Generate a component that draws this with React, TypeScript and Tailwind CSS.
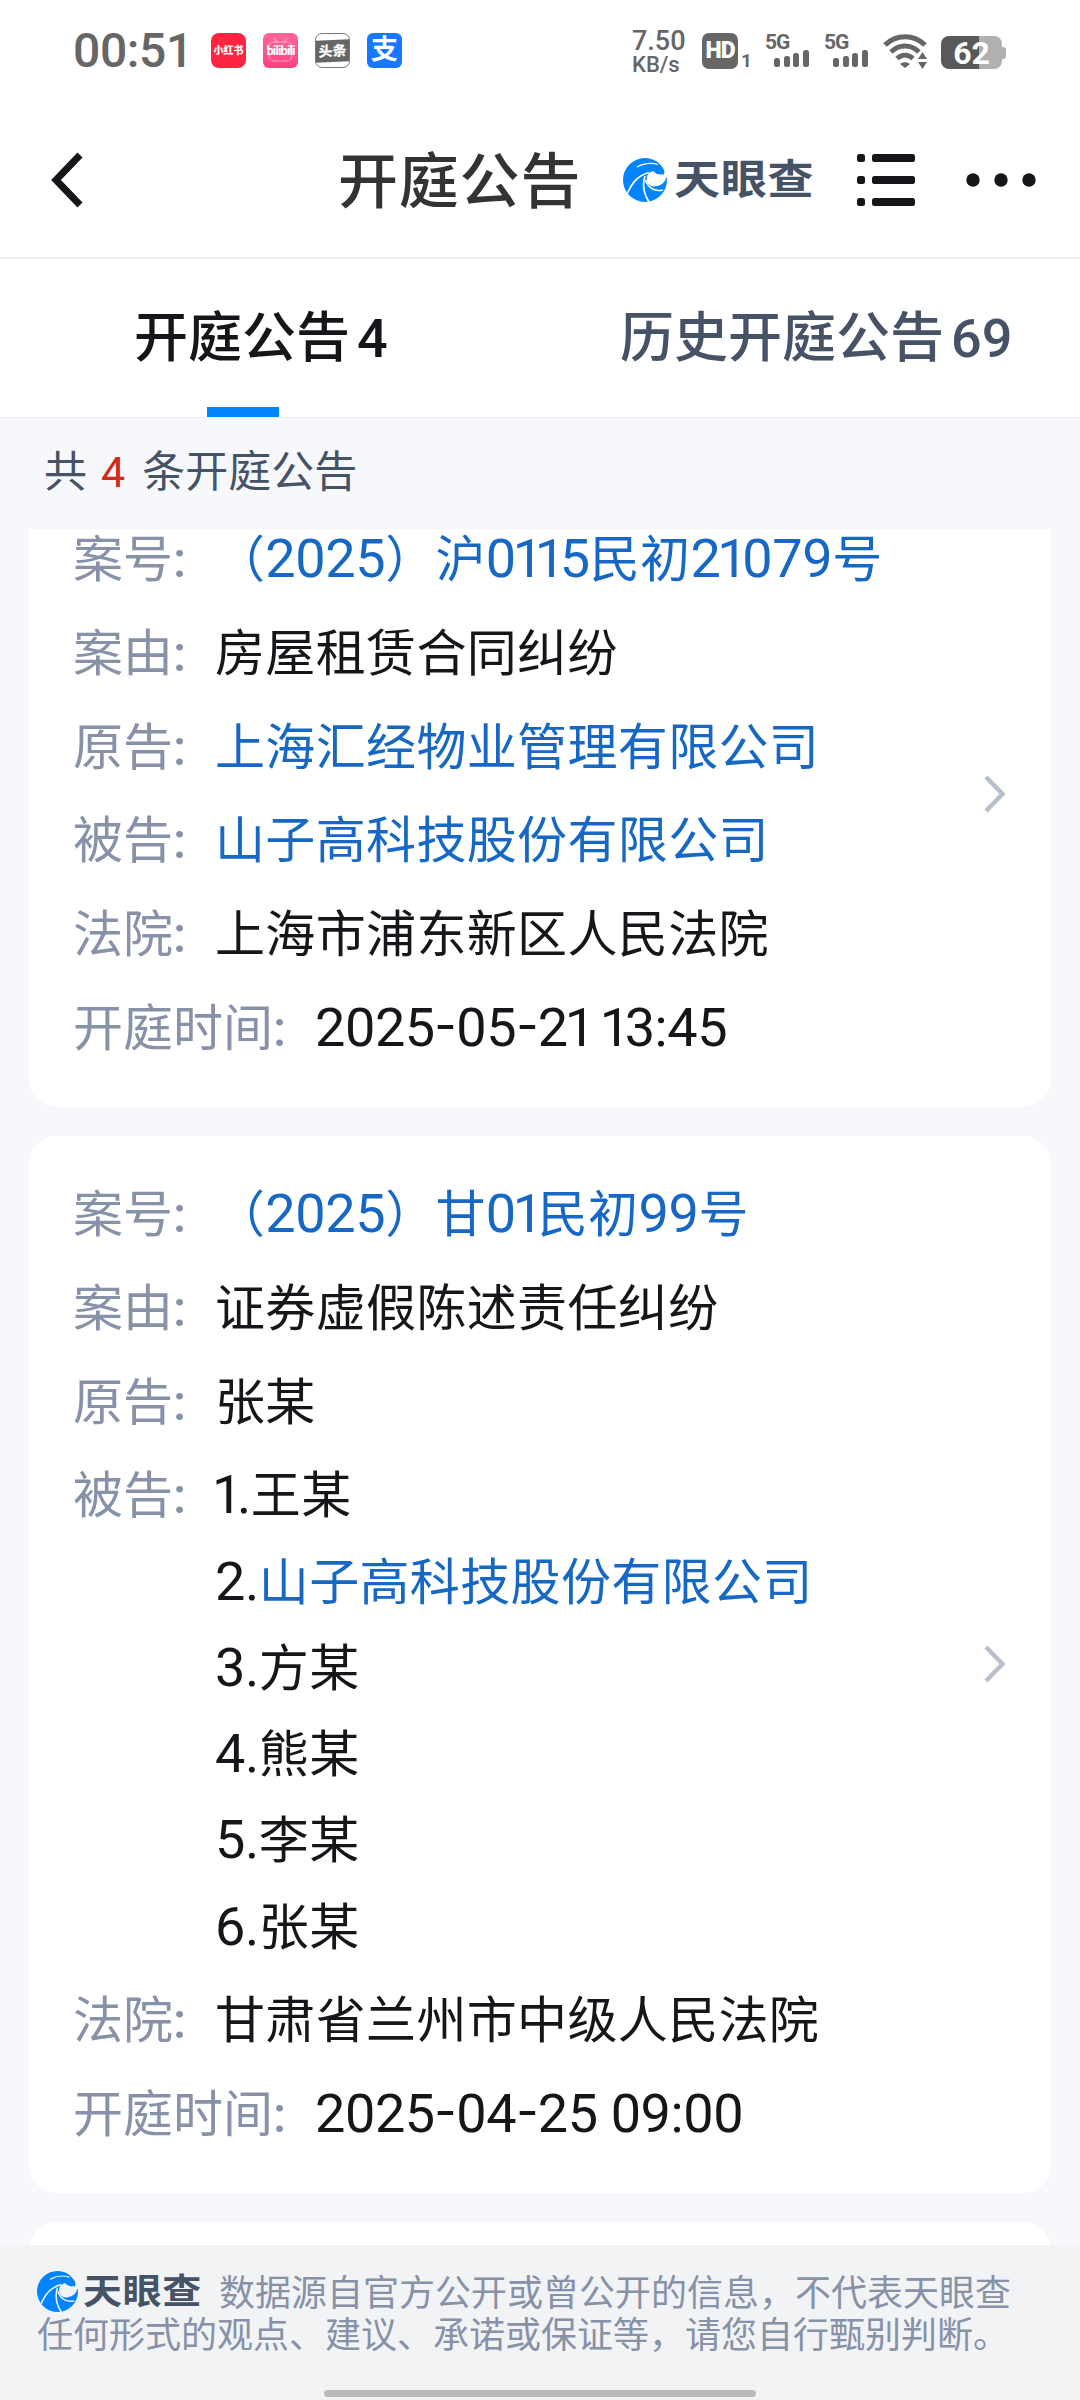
import type { ReactNode } from 'react'

interface Field {
  label: string
  value: string | string[]
  link?: boolean
}

interface Notice {
  id: string
  fields: Field[]
}

const COMPANY = '山子高科技股份有限公司'

const notices: Notice[] = [
  {
    id: '21079',
    fields: [
      { label: '案号', value: '（2025）沪0115民初21079号', link: true },
      { label: '案由', value: '房屋租赁合同纠纷' },
      { label: '原告', value: '上海汇经物业管理有限公司', link: true },
      { label: '被告', value: COMPANY, link: true },
      { label: '法院', value: '上海市浦东新区人民法院' },
      { label: '开庭时间', value: '2025-05-21 13:45' },
    ],
  },
  {
    id: '99',
    fields: [
      { label: '案号', value: '（2025）甘01民初99号', link: true },
      { label: '案由', value: '证券虚假陈述责任纠纷' },
      { label: '原告', value: '张某' },
      { label: '被告', value: ['王某', COMPANY, '方某', '熊某', '李某', '张某'] },
      { label: '法院', value: '甘肃省兰州市中级人民法院' },
      { label: '开庭时间', value: '2025-04-25 09:00' },
    ],
  },
]

// digits are set slightly larger than the hanzi around them, with a narrow 1 and a wide hyphen
function Digits({ text }: { text: string }) {
  return (
    <span className="text-[54px] leading-none tracking-[-0.4px]">
      {text.split(/([1-])/).map((part, i) => {
        if (part === '1') {
          return (
            <span key={i} className="-mr-[5px] -ml-[3px]">
              1
            </span>
          )
        }
        if (part === '-') {
          return (
            <span key={i} className="mx-[3.5px] inline-block -translate-y-[3px] scale-x-[1.2]">
              -
            </span>
          )
        }
        return part
      })}
    </span>
  )
}

function Mixed({ text }: { text: string }) {
  return text
    .split(/([0-9][0-9.:\- ]*)/)
    .map((part, i) => (i % 2 ? <Digits key={i} text={part} /> : part))
}

function Swirl({ className, gap }: { className: string; gap: string }) {
  return (
    <svg viewBox="0 0 44 44" className={className} fill="none">
      <circle cx="22" cy="22" r="22" fill="#0084ff" />
      <path d="M40.500 17.500C38 11 27 11 24 18C22 25 28 30 34 28C39 27 42 24 43.500 19L47 14L41 12Z" fill={gap} />
      <path d="M35 4L48 4L46 20L41 18.500C42 14 40 9 35 4Z" fill={gap} />
      <path d="M30 13C34 17 38 17.500 41.500 15C41 10 38 7 34 5.500Z" fill="#0084ff" />
      <path d="M14 9C21 5 28 4.500 35 6.500" stroke={gap} strokeWidth="1.3" />
      <path d="M4.500 35C9 25 14 18 26 14.500" stroke={gap} strokeWidth="1.7" />
      <path d="M22 18C19 27 21 36 26 44" stroke={gap} strokeWidth="1.7" />
      <path d="M22.500 22C25 30 32 34 40 32" stroke={gap} strokeWidth="1.500" />
    </svg>
  )
}

function SignalBars() {
  return (
    <div className="flex w-[59px] flex-col pt-[2px]">
      <span className="h-[14px] text-[21px] leading-[14px] font-bold tracking-[-1px]">5G</span>
      <svg viewBox="0 0 36 17" className="mt-px ml-[9px] h-[17px] w-[36px]" fill="currentColor">
        <rect x="0" y="8" width="6" height="9" rx="2.5" />
        <rect x="10" y="6" width="6" height="11" rx="2.5" />
        <rect x="19" y="3" width="6" height="14" rx="2.5" />
        <rect x="29" y="0" width="6" height="17" rx="2.5" />
      </svg>
    </div>
  )
}

function StatusBar() {
  return (
    <div className="flex h-[102px] items-start pt-[33px] pl-[73px] text-[#666]">
      <span className="w-[138px] text-[48px] leading-[35px] font-medium tracking-[-0.4px]">00:51</span>
      <div className="flex gap-[17px]">
        <span className="flex size-[35px] items-center justify-center rounded-[8px] bg-[#ff2442] text-[10px] font-black whitespace-nowrap text-white">
          小红书
        </span>
        <span className="relative flex size-[35px] items-center justify-center rounded-[6px] bg-linear-to-b from-[#ff6699] to-[#ff3f7f] text-[13px] font-bold tracking-[-0.9px] text-white">
          <svg viewBox="0 0 35 35" className="absolute inset-0" fill="none" stroke="#fff" strokeOpacity="0.25" strokeWidth="2">
            <rect x="6" y="9" width="23" height="19" rx="5" />
            <path d="M11 5L14 9M24 5L21 9" />
          </svg>
          bilibili
        </span>
        <span className="flex size-[35px] flex-col justify-center rounded-[7px] border border-[#777] bg-white">
          <span className="flex h-[22px] -skew-y-3 items-center justify-center bg-[#666] text-[14px] font-black text-white">
            头条
          </span>
        </span>
        <span className="flex size-[35px] items-center justify-center rounded-[6px] bg-[#1677ff] text-[27px] leading-none font-bold text-white">
          支
        </span>
      </div>
      <div className="-mt-[4px] ml-[230px] w-[70px] font-medium">
        <div className="text-[27px] leading-[25px]">7.50</div>
        <div className="text-[22px] leading-[21px]">KB/s</div>
      </div>
      <span className="flex size-[36px] items-center justify-center rounded-[7px] bg-[#666] text-[23px] font-black tracking-[-1px] text-white">
        HD
      </span>
      <span className="w-[27px] pt-[20px] pl-[3px] text-[19px] leading-[16px] font-bold">1</span>
      <SignalBars />
      <SignalBars />
      <svg viewBox="0 0 44 35" className="mt-px h-[35px] w-[44px]" fill="none" stroke="currentColor" strokeWidth="5">
        <path d="M2 11C13 0 31 0 42 11" />
        <path d="M8 18C16 10 28 10 36 18" />
        <path d="M14 24.5C19 20 25 20 30 24.5" />
        <path d="M17 30C20 27.500 24 27.500 27 30L22 34Z" fill="currentColor" stroke="none" />
        <path d="M35 25L39.500 18L44 25ZM35 28L39.500 35L44 28Z" fill="currentColor" stroke="none" />
      </svg>
      <div className="ml-[14px] flex items-center pt-[3px]">
        <div className="flex h-[33px] w-[61px] items-center justify-center rounded-[8px] bg-linear-to-r from-[#595959] from-[63%] to-[#b0b0b0] to-[63%] text-[32px] leading-none font-bold text-white">
          62
        </div>
        <div className="h-[12px] w-[4px] rounded-r-[3px] bg-[#b0b0b0]" />
      </div>
    </div>
  )
}

function Header() {
  return (
    <header className="flex h-[157px] items-center border-b-2 border-[#efefef] pt-px pl-[51px]">
      <svg viewBox="0 0 32 56" className="h-[56px] w-[32px]" fill="none" stroke="#15161a" strokeWidth="7">
        <path d="M29 3L5 28L29 53" />
      </svg>
      <h1 className="ml-[255px] w-[285px] pt-[6px] text-[60px] leading-none font-medium tracking-[0.8px] text-[#333]">
        开庭公告
      </h1>
      <Swirl className="size-[44px]" gap="#fff" />
      <span className="ml-[7px] w-[183px] origin-center scale-y-90 text-[46px] leading-none font-bold tracking-[0.8px] text-[#465266]">
        天眼查
      </span>
      <svg viewBox="0 0 58 52" className="h-[52px] w-[58px]" fill="#15161a">
        {[0, 22, 44].map((y) => (
          <g key={y}>
            <rect x="0" y={y} width="8" height="8" rx="2.500" />
            <rect x="15" y={y} width="43" height="8" rx="2.500" />
          </g>
        ))}
      </svg>
      <svg viewBox="0 0 70 14" className="ml-[51px] h-[14px] w-[70px]" fill="#15161a">
        <circle cx="7" cy="7" r="6.700" />
        <circle cx="35" cy="7" r="6.700" />
        <circle cx="63" cy="7" r="6.700" />
      </svg>
    </header>
  )
}

function Tabs() {
  return (
    <nav className="flex h-[159px] border-b border-[#ebeef3] text-[54px] leading-[160px] font-medium whitespace-nowrap">
      <div className="relative w-[486px] pl-[134px] text-[#15161a]">
        开庭公告<span className="pl-[7px]">4</span>
        <span className="absolute bottom-0 left-[207px] h-[10px] w-[72px] bg-[#0084ff]" />
      </div>
      <div className="pl-[134px] text-[#465266]">
        历史开庭公告<span className="pl-[7px]">69</span>
      </div>
    </nav>
  )
}

function Row({ label, children }: { label: string; children: ReactNode }) {
  return (
    <div className="flex">
      <dt className="tracking-normal text-[#8791a7]">
        {label}
        <span className="inline-block w-[42px] font-medium">:</span>
      </dt>
      <dd>{children}</dd>
    </div>
  )
}

function NoticeCard({ notice }: { notice: Notice }) {
  return (
    <article className="flex items-center justify-between rounded-[28px] bg-white pt-[36px] pr-[45px] pb-[35px] pl-[44px]">
      <dl className="flex flex-col gap-[7.5px] text-[50px] leading-[86.25px] tracking-[0.35px] whitespace-nowrap">
        {notice.fields.map(({ label, value, link }) => (
          <Row key={label} label={label}>
            {Array.isArray(value) ? (
              value.map((name, i) => (
                <div key={i} className="h-[86.25px]">
                  <Mixed text={`${i + 1}.`} />
                  <span className={name === COMPANY ? 'text-[#1768c4]' : ''}>{name}</span>
                </div>
              ))
            ) : (
              <div className={link ? 'h-[86.25px] text-[#1768c4]' : 'h-[86.25px]'}>
                <Mixed text={value} />
              </div>
            )}
          </Row>
        ))}
      </dl>
      <svg viewBox="0 0 22 38" className="-mt-[2px] h-[38px] w-[22px]" fill="none" stroke="#b8bfcc" strokeWidth="4.500">
        <path d="M2 2L18.500 19L2 36" />
      </svg>
    </article>
  )
}

export default function App() {
  return (
    <div className="flex h-[2400px] w-[1080px] flex-col overflow-hidden bg-[#f6f8fc] font-['Roboto','Noto_Sans_CJK_SC',sans-serif] text-[#15161a]">
      <div className="bg-white">
        <StatusBar />
        <Header />
        <Tabs />
      </div>

      <p className="h-[111px] shrink-0 pl-[44px] text-[43px] leading-[108px] text-[#465266]">
        共<span className="pr-[17px] pl-[14px] text-[#cf2a1c]">4</span>条开庭公告
      </p>

      {/* scrolled list, clipped at both ends */}
      <main className="h-[1716px] shrink-0 overflow-hidden px-[29px]">
        <div className="-mt-[48px] flex flex-col gap-[29px]">
          {notices.map((notice) => (
            <NoticeCard key={notice.id} notice={notice} />
          ))}
          <div className="h-[120px] rounded-[28px] bg-white" />
        </div>
      </main>

      <footer className="flex h-[155px] shrink-0 flex-col bg-[#f1f3f5] pt-[28px] pl-[37px] text-[36px] leading-[42px] whitespace-nowrap text-[#8791a7]">
        <div className="flex items-center">
          <Swirl className="-mt-[5px] size-[41px]" gap="#f1f3f5" />
          <span className="-mt-[5px] ml-[5px] w-[136px] scale-y-90 text-[39px] font-bold tracking-[0.6px] text-[#465266]">
            天眼查
          </span>
          数据源自官方公开或曾公开的信息，不代表天眼查
        </div>
        <div>任何形式的观点、建议、承诺或保证等，请您自行甄别判断。</div>
        <div className="mt-auto mb-[3px] ml-[287px] h-[7px] w-[432px] rounded-full bg-[#b8bab9]" />
      </footer>
    </div>
  )
}
